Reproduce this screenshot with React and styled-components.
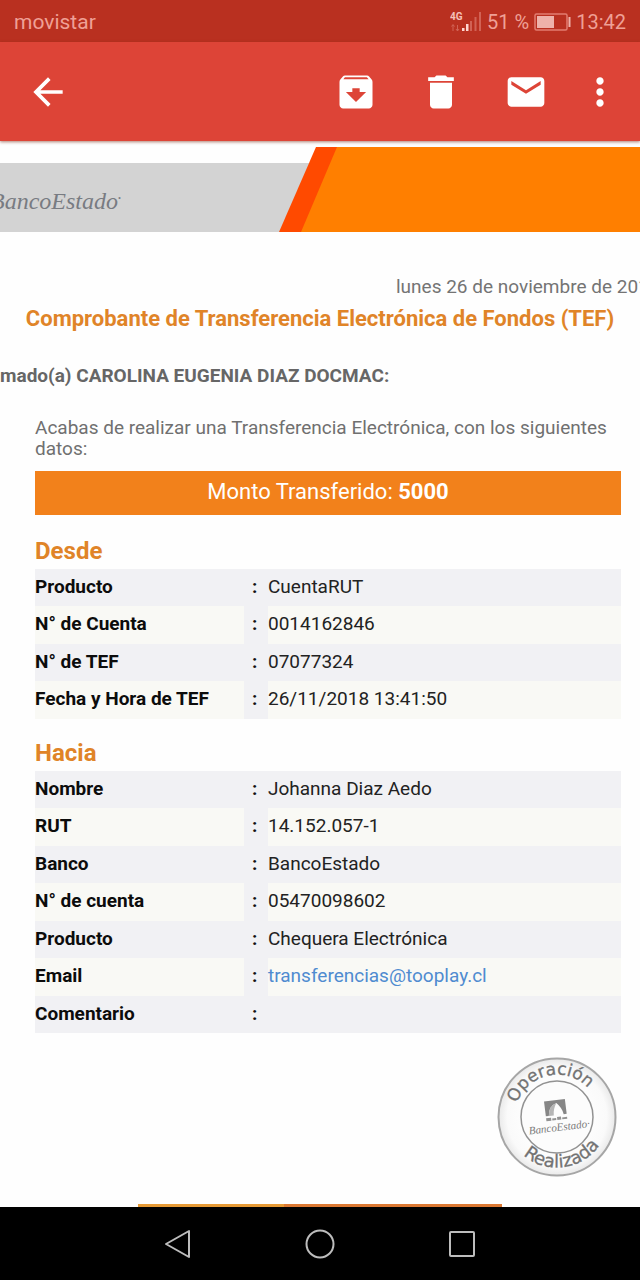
import React from "react";
import styled, { createGlobalStyle, css } from "styled-components";
import { MdArchive, MdArrowBack, MdDelete, MdEmail, MdMoreVert } from "react-icons/md";

const GlobalStyle = createGlobalStyle`
  *, *::before, *::after { box-sizing: border-box; }
  body {
    margin: 0;
    background: #fefefe;
    font-family: Roboto, "Liberation Sans", sans-serif;
    color: #111;
  }
`;

const Screen = styled.div`
  display: flex;
  flex-direction: column;
  min-height: 100vh;
  overflow-x: hidden;
`;

const StatusBar = styled.div`
  display: flex;
  align-items: center;
  justify-content: space-between;
  height: 42px;
  padding: 2px 14px 0;
  background: #b93020;
  color: #efa096;
  font-size: 20px;
  line-height: 24px;
`;

const Carrier = styled.span`
  font-size: 21px;
`;

const StatusGroup = styled.div`
  display: flex;
  align-items: center;
  gap: 5px;
`;

const AppBar = styled.header`
  display: flex;
  align-items: center;
  justify-content: space-between;
  height: 99px;
  padding: 0 8px 0 16px;
  background: #dd4437;
  box-shadow: 0 1px 3px rgba(120, 40, 20, 0.6);
`;

const AppActions = styled.div`
  display: flex;
`;

const IconButton = styled.button`
  display: flex;
  align-items: center;
  justify-content: center;
  width: ${({ $width }) => $width}px;
  height: 64px;
  padding: 0;
  border: 0;
  background: none;
  color: #fff;
  font-size: 44px;
`;

const Mail = styled.main`
  flex: 1;
  display: flex;
  flex-direction: column;
  padding-top: 6px;
`;

const Banner = styled.div`
  display: flex;
  align-items: flex-end;
  height: 85px;
  background: linear-gradient(#d3d3d3, #d3d3d3) bottom / 100% 69px no-repeat;
`;

const BankName = styled.div`
  flex: none;
  width: 279px;
  height: 69px;
  padding-top: 24px;
  text-indent: -10px;
  font: italic 24px/28px "Liberation Serif", serif;
  color: #787b82;

  sup {
    font-size: 8px;
    line-height: 8px;
    vertical-align: 8px;
  }
`;

const BannerSlant = styled.div`
  flex: 1;
  align-self: stretch;
  background: #ff4a00;
  clip-path: polygon(37px 0, 100% 0, 100% 100%, 0 100%);

  &::before {
    content: "";
    display: block;
    height: 100%;
    background: #ff7f00;
    clip-path: polygon(58px 0, 100% 0, 100% 100%, 22px 100%);
  }
`;

const MailDate = styled.p`
  margin: 45px 0 8px;
  padding-left: 396px;
  overflow: hidden;
  white-space: nowrap;
  font-size: 19px;
  line-height: 20px;
  color: #747474;
`;

const Title = styled.h1`
  margin: 0 0 33px;
  text-align: center;
  white-space: nowrap;
  font-size: 22px;
  line-height: 28px;
  font-weight: 700;
  color: #e08428;
`;

const Greeting = styled.p`
  margin: 0 0 31px;
  font-size: 19px;
  line-height: 20px;
  font-weight: 700;
  color: #666;
`;

const Body = styled.section`
  padding: 0 19px 0 35px;
`;

const Intro = styled.p`
  margin: 0 0 12px;
  font-size: 19px;
  line-height: 21px;
  color: #707070;
`;

const Amount = styled.div`
  margin-bottom: 22px;
  padding: 7px 0 9px;
  background: #f2811b;
  color: #fff;
  text-align: center;
  font-size: 22px;
  line-height: 28px;
`;

const SectionTitle = styled.h2`
  margin: 0 0 4px;
  font-size: 24px;
  line-height: 28px;
  font-weight: 700;
  color: #e08428;
`;

const DataTable = styled.table`
  width: 100%;
  margin-bottom: 20px;
  border-collapse: collapse;
  table-layout: fixed;
  font-size: 19px;
  line-height: 24px;
  text-align: left;
`;

const cell = css`
  padding: 0 0 2px;
  background: #f1f1f4;
`;

const Label = styled.th`
  ${cell}
  width: 209px;
  font-weight: 700;
  color: #0c0c0c;
`;

const Colon = styled.td`
  ${cell}
  width: 24px;
  padding-left: 8px;
  font-weight: 700;
`;

const Value = styled.td`
  ${cell}
  color: #222;
`;

const Row = styled.tr`
  height: 37px;

  &:nth-child(even) {
    height: 38px;
  }

  &:nth-child(even) ${Label}, &:nth-child(even) ${Value} {
    background: #f9f9f5;
  }
`;

const MailLink = styled.a`
  color: #4f8bd0;
  text-decoration: none;
`;

const StampRow = styled.div`
  display: flex;
  justify-content: flex-end;
  margin: 4px 23px 27px 0;
`;

const FooterImage = styled.div`
  width: 57%;
  height: 3px;
  margin: auto auto 0;
  background: linear-gradient(90deg, #e69a35 40%, #db7832 40%);
`;

const NavBar = styled.nav`
  display: flex;
  justify-content: center;
  height: 73px;
  background: #000;
`;

const NavButton = styled.button`
  display: flex;
  align-items: center;
  justify-content: center;
  width: 142px;
  padding: 0;
  border: 0;
  background: none;
  color: #bdbdbd;
`;

const origin = [
  ["Producto", "CuentaRUT"],
  ["N° de Cuenta", "0014162846"],
  ["N° de TEF", "07077324"],
  ["Fecha y Hora de TEF", "26/11/2018 13:41:50"],
];

const target = [
  ["Nombre", "Johanna Diaz Aedo"],
  ["RUT", "14.152.057-1"],
  ["Banco", "BancoEstado"],
  ["N° de cuenta", "05470098602"],
  ["Producto", "Chequera Electrónica"],
  ["Email", "transferencias@tooplay.cl"],
  ["Comentario", ""],
];

function Signal() {
  return (
    <svg width="32" height="24" viewBox="0 0 32 24" fill="#efa096" aria-hidden="true">
      <text x="0" y="10" fontSize="10" fontWeight="700" fill="#f5c0b8">4G</text>
      <g opacity="0.45">
        <path d="M3 15v6M1.5 16.5l1.5-2 1.5 2M7.500 15v6M6 19l1.500 2 1.500-2" stroke="#efa096" fill="none" />
        <path d="M20 11h2v10h-2zM24.500 7h2v14h-2zM29 2h2v19h-2z" />
      </g>
      <path d="M12 18h2.500v3H12zM16 14h2.500v7H16z" fill="#ffd5cf" />
    </svg>
  );
}

function Battery() {
  return (
    <svg width="37" height="18" viewBox="0 0 37 18" aria-hidden="true">
      <rect x="1" y="1" width="32" height="16" rx="1.500" fill="none" stroke="#e27c70" strokeWidth="1.500" />
      <rect x="3" y="3" width="17" height="12" fill="#eeb2aa" />
      <rect x="34.500" y="4" width="2" height="10" fill="#eeb2aa" />
    </svg>
  );
}

function Stamp() {
  return (
    <svg width="120" height="120" viewBox="-60 -60 120 120" role="img" aria-label="Operación Realizada">
      <defs>
        <radialGradient id="stampFill">
          <stop offset="0.6" stopColor="#fdfdfd" />
          <stop offset="0.85" stopColor="#fafafa" />
          <stop offset="1" stopColor="#e9e9e9" />
        </radialGradient>
        <path id="arcTop" d="M-41 9A42 42 0 1 1 24 34" />
        <path id="arcBottom" d="M-50 12A51.500 51.500 0 0 0 51 -7" />
      </defs>
      <circle r="58.500" fill="url(#stampFill)" stroke="#a6a6a6" strokeWidth="2" />
      <circle r="36" fill="#fcfcfc" stroke="#929292" strokeWidth="1.500" />
      <g
        fontFamily='"DejaVu Sans", sans-serif'
        fontSize="17"
        fill="#737373"
        stroke="#737373"
        strokeWidth="0.3"
      >
        <text><textPath href="#arcTop" startOffset="23">Operación</textPath></text>
        <text fontSize="18"><textPath href="#arcBottom" startOffset="31">Realizada</textPath></text>
      </g>
      <g transform="rotate(-7)">
        <path d="M-11 -17H10V-2H7Q6 -9 1 -14Q-7 -12 -8 -2H-11z" fill="#868686" />
        <path d="M-8 -2Q-7 -12 1 -14Q-3 -8 -3 -2z" fill="#b5b5b5" />
        <path d="M-11 0h5v3h-5zM-5 1h4v2h-4zM0 0h4v3H0zM5 1h5v2H5z" fill="#929292" />
        <text
          x="1"
          y="14"
          textAnchor="middle"
          fontFamily='"Liberation Serif", serif'
          fontStyle="italic"
          fontSize="11"
          fill="#7b7b7b"
        >
          BancoEstado·
        </text>
      </g>
    </svg>
  );
}

function TransferTable({ rows }) {
  return (
    <DataTable>
      <tbody>
        {rows.map(([label, value]) => (
          <Row key={label}>
            <Label scope="row">{label}</Label>
            <Colon>:</Colon>
            <Value>{value.includes("@") ? <MailLink href={`mailto:${value}`}>{value}</MailLink> : value}</Value>
          </Row>
        ))}
      </tbody>
    </DataTable>
  );
}

export default function App() {
  return (
    <Screen>
      <GlobalStyle />
      <StatusBar>
        <Carrier>movistar</Carrier>
        <StatusGroup>
          <Signal />
          <span>51 %</span>
          <Battery />
          <span>13:42</span>
        </StatusGroup>
      </StatusBar>
      <AppBar>
        <IconButton $width={64} aria-label="Volver"><MdArrowBack /></IconButton>
        <AppActions>
          <IconButton $width={85} aria-label="Archivar"><MdArchive /></IconButton>
          <IconButton $width={85} aria-label="Eliminar"><MdDelete /></IconButton>
          <IconButton $width={85} aria-label="Marcar como no leído"><MdEmail /></IconButton>
          <IconButton $width={64} aria-label="Más opciones"><MdMoreVert /></IconButton>
        </AppActions>
      </AppBar>
      <Mail>
        <Banner>
          <BankName>BancoEstado<sup>•</sup></BankName>
          <BannerSlant />
        </Banner>
        <MailDate>lunes 26 de noviembre de 2018</MailDate>
        <Title>Comprobante de Transferencia Electrónica de Fondos (TEF)</Title>
        <Greeting>mado(a) CAROLINA EUGENIA DIAZ DOCMAC:</Greeting>
        <Body>
          <Intro>Acabas de realizar una Transferencia Electrónica, con los siguientes datos:</Intro>
          <Amount>Monto Transferido: <b>5000</b></Amount>
          <SectionTitle>Desde</SectionTitle>
          <TransferTable rows={origin} />
          <SectionTitle>Hacia</SectionTitle>
          <TransferTable rows={target} />
        </Body>
        <StampRow><Stamp /></StampRow>
        <FooterImage />
      </Mail>
      <NavBar>
        <NavButton aria-label="Atrás">
          <svg width="28" height="32" viewBox="0 0 28 32" fill="none" stroke="currentColor" strokeWidth="2" strokeLinejoin="round">
            <path d="M25 3v26L2 16z" />
          </svg>
        </NavButton>
        <NavButton aria-label="Inicio">
          <svg width="30" height="30" viewBox="0 0 30 30" fill="none" stroke="currentColor" strokeWidth="2">
            <circle cx="15" cy="15" r="13.500" />
          </svg>
        </NavButton>
        <NavButton aria-label="Recientes">
          <svg width="28" height="28" viewBox="0 0 28 28" fill="none" stroke="currentColor" strokeWidth="2">
            <rect x="2" y="2" width="24" height="24" rx="1" />
          </svg>
        </NavButton>
      </NavBar>
    </Screen>
  );
}
